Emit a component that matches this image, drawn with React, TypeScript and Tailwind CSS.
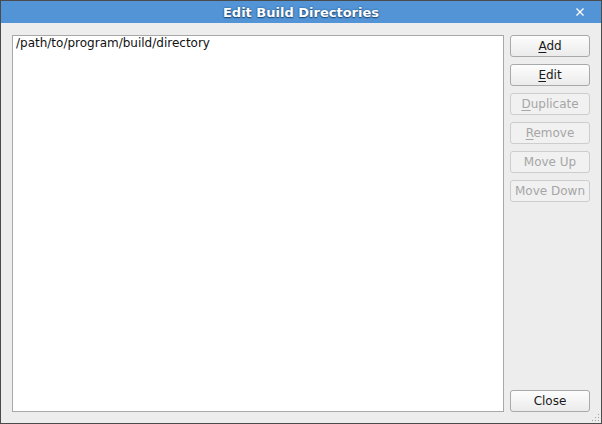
import React from 'react';

const buttons = [
  { label: 'Add', key: 'A', rest: 'dd', enabled: true },
  { label: 'Edit', key: 'E', rest: 'dit', enabled: true },
  { label: 'Duplicate', key: 'D', rest: 'uplicate', enabled: false },
  { label: 'Remove', key: 'R', rest: 'emove', enabled: false },
  { label: 'Move Up', key: '', rest: 'Move Up', enabled: false },
  { label: 'Move Down', key: '', rest: 'Move Down', enabled: false },
];

function DialogButton({ k, rest, enabled }: { k: string; rest: string; enabled: boolean }) {
  return (
    <button
      className={
        enabled
          ? 'h-[22px] w-[80px] rounded-[3px] border border-[#a9a9a9] bg-gradient-to-b from-[#fdfdfd] to-[#ebebeb] text-[12px] leading-none text-[#1a1a1a]'
          : 'h-[22px] w-[80px] rounded-[3px] border border-[#cdcdcd] bg-[#f1f1f1] text-[12px] leading-none text-[#a6a6a6]'
      }
    >
      {k && <span className="underline underline-offset-[2px]">{k}</span>}
      {rest}
    </button>
  );
}

export default function App() {
  return (
    <div
      className="relative flex h-[424px] w-[602px] flex-col border border-[#4b4b4b] bg-[#ededed]"
      style={{ fontFamily: '"DejaVu Sans", Verdana, sans-serif' }}
    >
      {/* title bar */}
      <div className="relative flex h-[22px] shrink-0 items-center justify-center bg-[#5294d5]">
        <span className="text-[13px] font-bold leading-none text-white [text-shadow:0_0_2px_#1f4a7a,0_1px_1px_#1f4a7a]">
          Edit Build Directories
        </span>
        <svg className="absolute right-[17px] top-[7px]" width="8" height="8" viewBox="0 0 8 8">
          <path d="M0.5 0.5 L7.5 7.5 M7.5 0.5 L0.5 7.5" stroke="#ffffff" strokeWidth="1.4" />
        </svg>
      </div>

      {/* body */}
      <div className="flex flex-1 gap-[6px] pb-[11px] pl-[11px] pr-[11px] pt-[12px]">
        <div className="flex-1 border border-[#a8a8a8] bg-white px-[3px]">
          <div className="text-[12px] leading-[14px] text-[#111]">/path/to/program/build/directory</div>
        </div>
        <div className="flex w-[80px] flex-col gap-[7px]">
          {buttons.map((b) => (
            <DialogButton key={b.label} k={b.key} rest={b.rest} enabled={b.enabled} />
          ))}
          <div className="flex-1" />
          <DialogButton k="" rest="Close" enabled={true} />
        </div>
      </div>

      {/* resize grip */}
      <svg className="absolute bottom-[1px] right-[1px]" width="10" height="10" viewBox="0 0 10 10">
        {[
          [8, 2],
          [5, 5],
          [8, 5],
          [2, 8],
          [5, 8],
          [8, 8],
        ].map(([x, y]) => (
          <rect key={`${x}-${y}`} x={x} y={y} width="1" height="1" fill="#a0a0a0" />
        ))}
      </svg>
    </div>
  );
}
